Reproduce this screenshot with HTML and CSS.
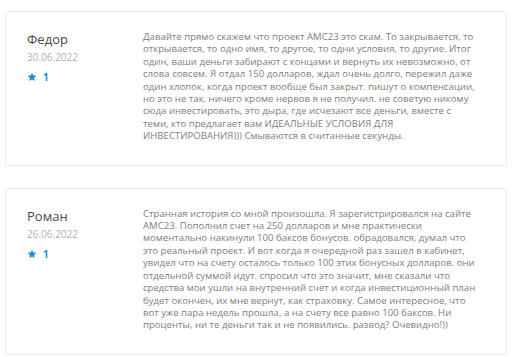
FILE: index.html
```html
<!DOCTYPE html>
<html lang="ru">
<head>
  <meta charset="UTF-8" />
  <meta name="viewport" content="width=device-width, initial-scale=1.0" />
  <title>Отзывы</title>
  <link rel="stylesheet" href="styles.css">
</head>
<body>
  <div class="reviews">
    <div class="review">
      <div class="author">
        <div class="name">Федор</div>
        <div class="date">30.06.2022</div>
        <div class="rating">
          <svg viewBox="0 0 24 24" width="10" height="10"><path d="M12 1.5l3.2 6.9 7.3.8-5.5 5 1.5 7.3L12 17.8l-6.5 3.7 1.5-7.3-5.5-5 7.3-.8z" fill="#1e8fd6"/></svg>
          <span>1</span>
        </div>
      </div>
      <div class="text">Давайте прямо скажем что проект АМС23 это скам. То закрывается, то открывается, то одно имя, то другое, то одни условия, то другие. Итог один, ваши деньги забирают с концами и вернуть их невозможно, от слова совсем. Я отдал 150 долларов, ждал очень долго, пережил даже один хлопок, когда проект вообще был закрыт. пишут о компенсации, но это не так. ничего кроме нервов я не получил. не советую никому сюда инвестировать, это дыра, где исчезают все деньги, вместе с теми, кто предлагает вам ИДЕАЛЬНЫЕ УСЛОВИЯ ДЛЯ ИНВЕСТИРОВАНИЯ))) Смываются в считанные секунды.</div>
    </div>

    <div class="review">
      <div class="author">
        <div class="name">Роман</div>
        <div class="date">26.06.2022</div>
        <div class="rating">
          <svg viewBox="0 0 24 24" width="10" height="10"><path d="M12 1.5l3.2 6.9 7.3.8-5.5 5 1.5 7.3L12 17.8l-6.5 3.7 1.5-7.3-5.5-5 7.3-.8z" fill="#1e8fd6"/></svg>
          <span>1</span>
        </div>
      </div>
      <div class="text">Странная история со мной произошла. Я зарегистрировался на сайте АМС23. Пополнил счет на 250 долларов и мне практически моментально накинули 100 баксов бонусов. обрадовался, думал что это реальный проект. И вот когда я очередной раз зашел в кабинет, увидел что на счету осталось только 100 этих бонусных долларов. они отдельной суммой идут. спросил что это значит, мне сказали что средства мои ушли на внутренний счет и когда инвестиционный план будет окончен, их мне вернут, как страховку. Самое интересное, что вот уже пара недель прошла, а на счету все равно 100 баксов. Ни проценты, ни те деньги так и не появились. развод? Очевидно!))</div>
    </div>
  </div>
</body>
</html>
```

FILE: styles.css
```css
body {
  margin: 0;
  padding: 11px 5px 0 5px;
  background: #ffffff;
  font-family: "Open Sans", sans-serif;
}
.reviews {
  display: flex;
  flex-direction: column;
  gap: 22px;
}
.review {
  display: flex;
  border: 1px solid #ececec;
  border-radius: 3px;
  padding: 19px 22px 22px 21px;
}
.author {
  width: 116px;
  flex-shrink: 0;
}
.name {
  font-size: 13px;
  color: #4a4a4a;
  line-height: 16px;
}
.date {
  font-size: 10px;
  color: #b0b0b0;
  margin-top: 3px;
}
.rating {
  display: flex;
  align-items: center;
  gap: 6px;
  margin-top: 6px;
  color: #1e8fd6;
  font-size: 10px;
  font-weight: bold;
}
.text {
  width: 336px;
  font-size: 9.6px;
  line-height: 12.4px;
  color: #808080;
}
```
